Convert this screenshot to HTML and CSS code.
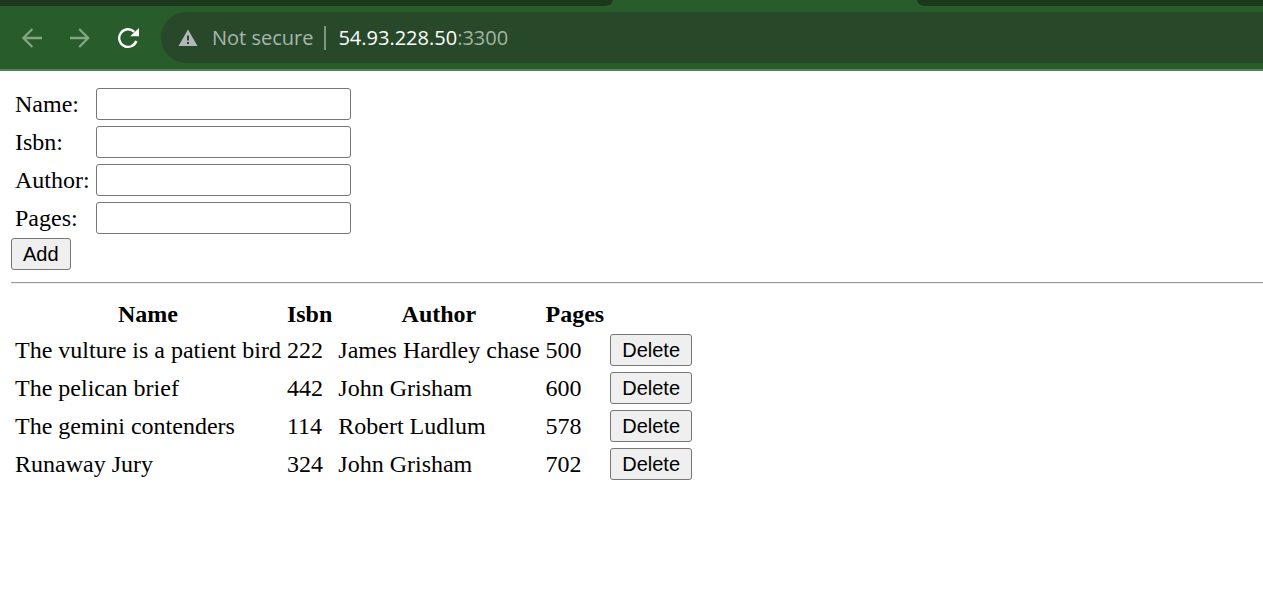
FILE: index.html
```html
<!DOCTYPE html>
<html lang="en">
<head>
<meta charset="utf-8">
<title>Books</title>
<link rel="stylesheet" href="styles.css">
</head>
<body>
<header class="browser">
  <div class="tabstrip">
    <div class="tab tab-left"></div>
    <div class="tab-active"></div>
    <div class="tab tab-right"></div>
  </div>
  <div class="toolbar">
    <nav class="nav">
      <button class="nav-button" type="button" aria-label="Back">
        <svg width="22" height="22" viewBox="0 0 22 22" fill="none" stroke="#83a785" stroke-width="2.3"><path d="M21 11H3M11.4 2L2.4 11L11.4 20"/></svg>
      </button>
      <button class="nav-button" type="button" aria-label="Forward">
        <svg width="22" height="22" viewBox="0 0 22 22" fill="none" stroke="#83a785" stroke-width="2.3"><path d="M1 11H19M10.2 2L19.2 11L10.2 20"/></svg>
      </button>
      <button class="nav-button" type="button" aria-label="Reload">
        <svg width="22" height="22" viewBox="0 0 22 22"><path d="M17.2 4.8A8.8 8.8 0 1 0 19.3 14" fill="none" stroke="#fff" stroke-width="2.4"/><path d="M22 1V9.3H13.2Z" fill="#fff"/></svg>
      </button>
    </nav>
    <div class="address">
      <svg class="warning" width="20" height="18" viewBox="0 0 20 18"><path d="M10 0.5L19.5 17H0.5Z" fill="#b3b7bb"/><path d="M9 6.5h2v5H9zM9 13h2v2H9z" fill="#27492a"/></svg>
      <span class="security">Not secure</span>
      <span class="divider"></span>
      <span class="url">54.93.228.50<span class="port">:3300</span></span>
    </div>
  </div>
</header>
<main class="page">
  <form class="form">
    <table class="grid">
      <tr><td><label for="name">Name:</label></td><td><input class="field" id="name" type="text"></td></tr>
      <tr><td><label for="isbn">Isbn:</label></td><td><input class="field" id="isbn" type="text"></td></tr>
      <tr><td><label for="author">Author:</label></td><td><input class="field" id="author" type="text"></td></tr>
      <tr><td><label for="pages">Pages:</label></td><td><input class="field" id="pages" type="text"></td></tr>
    </table>
    <button class="button" type="button">Add</button>
  </form>
  <hr class="rule">
  <table class="grid">
    <thead>
      <tr><th>Name</th><th>Isbn</th><th>Author</th><th>Pages</th><td></td></tr>
    </thead>
    <tbody>
      <tr><td>The vulture is a patient bird</td><td>222</td><td>James Hardley chase</td><td>500</td><td><button class="button" type="button">Delete</button></td></tr>
      <tr><td>The pelican brief</td><td>442</td><td>John Grisham</td><td>600</td><td><button class="button" type="button">Delete</button></td></tr>
      <tr><td>The gemini contenders</td><td>114</td><td>Robert Ludlum</td><td>578</td><td><button class="button" type="button">Delete</button></td></tr>
      <tr><td>Runaway Jury</td><td>324</td><td>John Grisham</td><td>702</td><td><button class="button" type="button">Delete</button></td></tr>
    </tbody>
  </table>
</main>
</body>
</html>
```
FILE: styles.css
```css
* {
  box-sizing: border-box;
}

body {
  margin: 0;
  background: #fff;
  color: #000;
  font: 24px/27px "Liberation Serif", "Times New Roman", serif;
}

.browser {
  background: #285c2b;
  border-bottom: 2px solid #528058;
}

.tabstrip {
  display: flex;
  height: 6px;
}

.tab {
  background: #1b381c;
}

.tab-left {
  flex: 613;
  border-bottom-right-radius: 8px 6px;
}

.tab-active {
  flex: 304;
}

.tab-right {
  flex: 346;
  border-bottom-left-radius: 8px 6px;
}

.toolbar {
  display: flex;
  align-items: center;
  gap: 22px;
  padding: 6px 0 6px 21px;
}

.nav {
  display: flex;
  gap: 26px;
}

.nav-button {
  display: flex;
  padding: 0;
  border: 0;
  background: none;
}

.address {
  display: flex;
  flex: 1;
  align-items: center;
  height: 51px;
  padding-left: 17px;
  border-radius: 26px 0 0 26px;
  background: #27492a;
  font: 20px/28px "Open Sans", "Noto Sans", sans-serif;
}

.warning {
  margin-right: 14px;
}

.security {
  color: #a9b5b0;
}

.divider {
  width: 2px;
  height: 24px;
  margin: 0 12px 0 11px;
  background: #7f9782;
}

.url {
  color: #fff;
}

.port {
  color: #a3b3a4;
}

.page {
  padding: 13px 0 13px 11px;
}

.grid {
  border-spacing: 2px;
}

.grid td,
.grid th {
  padding: 2px;
}

.field,
.button {
  display: block;
  height: 32px;
  border: 1px solid #767676;
  border-radius: 3px;
  color: #000;
  font: 20px/24px "Liberation Sans", Arial, sans-serif;
}

.field {
  width: 255px;
  padding: 2px 3px;
  background: #fff;
}

.button {
  padding: 0 11px;
  background: #efefef;
}

.rule {
  height: 2px;
  margin: 12px 0 13px;
  border: 0;
  border-top: 1px solid #9a9a9a;
  border-bottom: 1px solid #eee;
}
```
